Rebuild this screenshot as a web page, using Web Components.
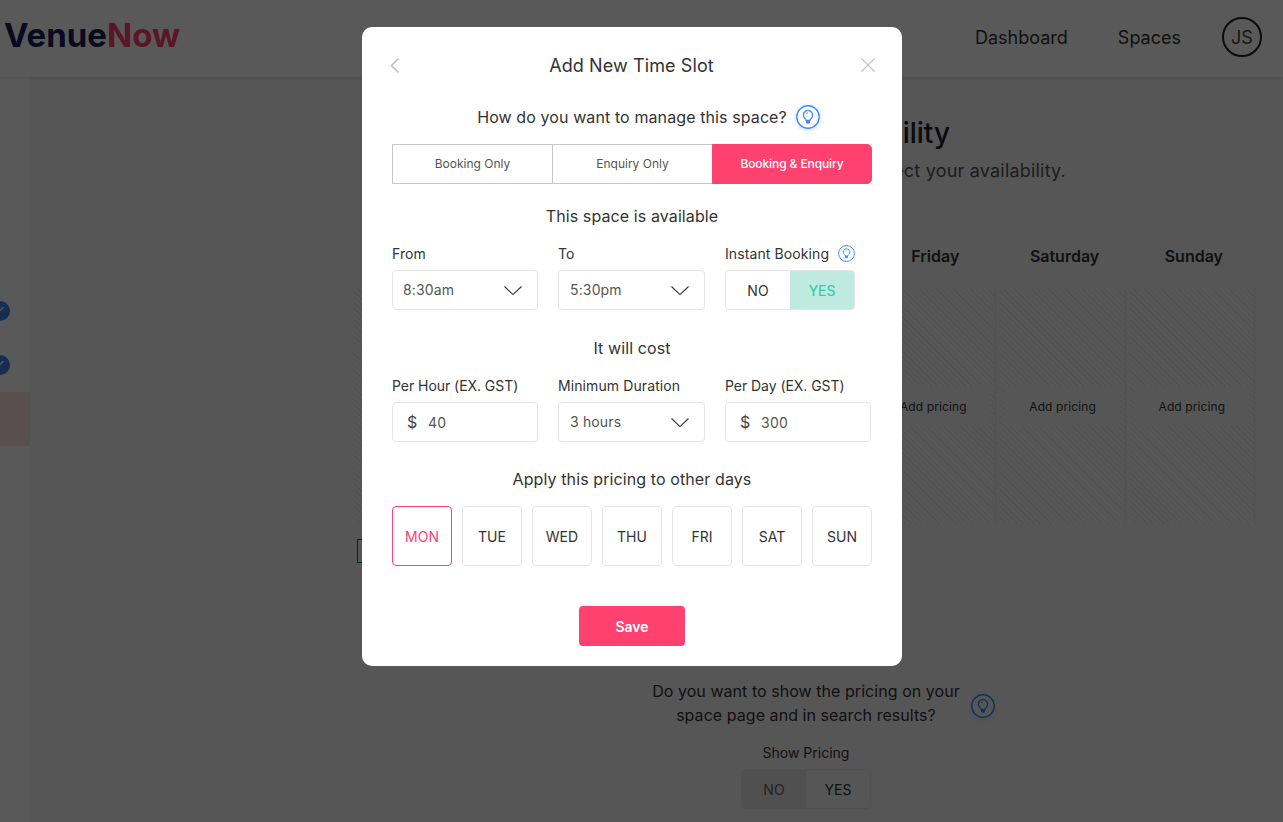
<!DOCTYPE html>
<html lang="en"><head><meta charset="utf-8"><title>Add New Time Slot</title>
<style>
html,body{margin:0;height:822px;overflow:hidden;background:#f6f6f6;font-family:Inter,"Noto Sans",sans-serif;color:#333}
</style></head><body>
<vn-page></vn-page>
<vn-overlay>
  <vn-modal></vn-modal>
</vn-overlay>
<script>
const bulb=(size,color)=>`<svg width="${size}" height="${size}" viewBox="0 0 24 24" fill="none" aria-hidden="true"><circle cx="12" cy="12" r="11.2" stroke="${color}" stroke-width="1.4"/><path d="M7.400 10a4.600 4.600 0 1 1 7.700 3.400c-.7.700-1.100 1.300-1.100 2.100h-4c0-.8-.4-1.400-1.100-2.100A4.600 4.600 0 0 1 7.400 10Z" stroke="${color}" stroke-width="1.300"/><path d="M10 15.500h4v2l-1 1.300h-2l-1-1.300Z" fill="${color}"/><path d="M10.200 9.200a2 2 0 0 1 1.800-1.500" stroke="${color}" stroke-width=".9"/></svg>`;
const chev=`<svg width="20" height="11" viewBox="0 0 20 11" fill="none" aria-hidden="true"><path d="M1.500 1.500 10 9.600l8.500-8.100" stroke="#333" stroke-width="1.100"/></svg>`;
function el(name,css,html){
  customElements.define(name,class extends HTMLElement{
    connectedCallback(){
      if(this.shadowRoot)return;
      const r=this.attachShadow({mode:"open"});
      r.innerHTML=`<style>${css}</style>${typeof html==="function"?html(this):html}`;
    }
  });
}
el("vn-hint",`:host{display:inline-flex;flex:none;border-radius:50%;box-shadow:0 1px 4px rgba(47,128,237,.25)}`,h=>bulb(h.getAttribute("size")||24,"#3f8cff"));

el("vn-header",`:host{display:flex;align-items:center;height:77px;background:#fff;box-shadow:0 1px 3px rgba(0,0,0,.12);position:relative;z-index:1;padding:0 21px 3px 4px;box-sizing:border-box;}
.logo{font-size:33px;font-weight:700;letter-spacing:0;color:#1a1f5c;margin-top:-4px;flex:1}
.logo b{font-weight:700;color:#ff4170}
nav{display:flex;align-items:center;font-size:18px;color:#333;letter-spacing:0}
span.l{margin-right:50px}
.av{width:40px;height:40px;box-sizing:border-box;border:2px solid #222;border-radius:50%;display:flex;align-items:center;justify-content:center;font-size:18px;color:#444}`,
`<div class="logo">Venue<b>Now</b></div><nav><span class="l">Dashboard</span><span class="l" style="margin-right:41px">Spaces</span><div class="av">JS</div></nav>`);

const tick=`<svg width="11" height="11" viewBox="0 0 11 11" fill="none"><path d="M.5 7 5.500 2" stroke="#fff" stroke-width="1.500"/></svg>`;
el("vn-sidebar",`:host{display:block;width:31px;box-sizing:border-box;background:#fff;border-right:1px solid #f0f0f0;padding-top:224px;overflow:hidden;flex:none}
.c{width:20px;height:20px;border-radius:50%;background:#3a80e8;margin:0 0 34px -10px;position:relative}
.c svg{position:absolute;left:8px;top:4px}
.a{height:54px;background:#ffe3e6;margin-top:-17px}`,
`<div class="c">${tick}</div><div class="c">${tick}</div><div class="a"></div>`);

el("vn-cell",`:host{display:block;height:235px;padding-top:98px;box-sizing:border-box;background:repeating-linear-gradient(45deg,#ececec 0 1px,#f8f8f8 1px 4px);border-right:1px solid #ebebeb}
div{margin:0 5px;height:39px;background:#f7f7f7;border-radius:4px;display:flex;align-items:center;justify-content:center;font-size:12px;color:#333;letter-spacing:.1px}`,
h=>h.hasAttribute("empty")?"":`<div>Add pricing</div>`);

el("vn-schedule",`:host{display:flex;flex-direction:column;align-items:center;width:901px;margin-left:323px;flex:none}
h1{align-self:flex-end;margin:37px 305px 0 0;font-size:28px;font-weight:500;line-height:38px;color:#1c2030;letter-spacing:0}
p{align-self:flex-end;margin:7px 189px 0 0;font-size:18px;line-height:24px;color:#555;letter-spacing:.2px}
.grid{display:grid;grid-template-columns:repeat(7,1fr);gap:0 4px;width:100%;margin-top:60px}
.d{font-size:16px;font-weight:600;color:#333;text-align:center;height:46px;line-height:26px;box-sizing:border-box;padding-left:3px}
.chk{align-self:flex-start;width:24px;height:24px;border:1px solid #1c5cc8;box-sizing:border-box;margin:15px 0 0 3px}
.q{display:flex;align-items:center;gap:11px;margin-top:116px;padding-left:38px;font-size:16px;line-height:24px;text-align:center;color:#333;letter-spacing:.05px}
.q vn-hint{margin-top:6px}
.sp{font-size:14px;margin:15px 0 0 3px;height:22px;line-height:22px;color:#333}
.t{display:flex;width:130px;height:40px;box-sizing:border-box;border:1px solid #e8e8e8;border-radius:4px;overflow:hidden;font-size:14px;margin:5px 0 0 3px}
.t span{flex:1;display:flex;align-items:center;justify-content:center}
.t .n{background:#e6e6e6;color:#666}`,
`<h1>ility</h1><p>ect your availability.</p>
<div class="grid">
<div class="d"></div><div class="d"></div><div class="d"></div><div class="d"></div><div class="d">Friday</div><div class="d">Saturday</div><div class="d">Sunday</div>
<vn-cell empty></vn-cell><vn-cell empty></vn-cell><vn-cell empty></vn-cell><vn-cell empty></vn-cell><vn-cell></vn-cell><vn-cell></vn-cell><vn-cell></vn-cell>
</div>
<div class="chk"></div>
<div class="q"><span>Do you want to show the pricing on your<br>space page and in search results?</span><vn-hint></vn-hint></div>
<div class="sp">Show Pricing</div>
<div class="t"><span class="n">NO</span><span>YES</span></div>`);

el("vn-page",`:host{display:block;height:822px;overflow:hidden}
main{display:flex;height:745px}`,
`<vn-header></vn-header><main><vn-sidebar></vn-sidebar><vn-schedule></vn-schedule></main>`);

el("vn-overlay",`:host{position:fixed;inset:0;background:rgba(0,0,0,.65);display:flex;justify-content:center;align-items:flex-start;padding:27px 19px 0 0;box-sizing:border-box;z-index:10}`,`<slot></slot>`);

el("vn-box",`:host{display:flex;align-items:center;height:40px;box-sizing:border-box;border:1px solid #e6e6e6;border-radius:4px;background:#fff;font-size:14px;color:#555;letter-spacing:.15px;padding:0 14px 0 10px;justify-content:space-between}
span{padding-bottom:1px}`,
h=>`<span>${h.getAttribute("value")}</span>${chev}`);
el("vn-money",`:host{display:flex;align-items:center;height:40px;box-sizing:border-box;border:1px solid #e6e6e6;border-radius:4px;background:#fff;font-size:14px;color:#555;letter-spacing:.3px;padding-left:14px}
i{font-style:normal;font-size:16px;width:21px;color:#444}`,
h=>`<i>$</i><span>${h.getAttribute("value")}</span>`);
el("vn-field",`:host{display:block}
label{display:flex;align-items:center;gap:9px;font-size:14px;color:#333;height:16px;margin:-1px 0 9px;letter-spacing:.1px;white-space:nowrap}
label.tight{letter-spacing:-.05px}`,
h=>`<label class="${h.hasAttribute("tight")?"tight":""}">${h.getAttribute("label")}${h.hasAttribute("hint")?bulb(17,"#3f8cff"):""}</label><slot></slot>`);
el("vn-yesno",`:host{display:flex;width:130px;height:40px;box-sizing:border-box;border:1px solid #e6e6e6;border-radius:4px;overflow:hidden;font-size:14px}
span{display:flex;align-items:center;justify-content:center;color:#333}
.n{width:64px}.y{flex:1;background:#bfeae0;color:#38cfa8;font-weight:500}`,
`<span class="n">NO</span><span class="y">YES</span>`);
el("vn-segments",`:host{display:flex;height:40px;font-size:12px;color:#555;letter-spacing:0}
span{width:161px;display:flex;align-items:center;justify-content:center;border:1px solid #c6c6c6;box-sizing:border-box;margin-right:-1px;padding-bottom:2px}
span:first-child{border-radius:5px 0 0 5px}
.on{width:160px;background:#ff4170;border-color:#ff4170;color:#fff;border-radius:0 5px 5px 0;margin-right:0;font-weight:500;letter-spacing:-.1px;position:relative}`,
`<span>Booking Only</span><span>Enquiry Only</span><span class="on">Booking &amp; Enquiry</span>`);
el("vn-days",`:host{display:flex;gap:10px;margin-top:15px}
span{width:60px;height:60px;box-sizing:border-box;border:1px solid #e6e6e6;border-radius:4px;display:flex;align-items:center;justify-content:center;font-size:14px;color:#333;letter-spacing:.05px}
.on{border-color:#ff4170;color:#ff4170}`,
`<span class="on">MON</span><span>TUE</span><span>WED</span><span>THU</span><span>FRI</span><span>SAT</span><span>SUN</span>`);

el("vn-modal",`:host{display:block;width:540px;height:639px;box-sizing:border-box;background:#fff;border-radius:10px;padding:0 30px;color:#333}
.head{display:flex;align-items:center;justify-content:space-between;height:76px;font-size:18px;font-weight:400;letter-spacing:.1px}
.head span{color:#333}
.head svg:first-child{margin-left:-4px}
.head svg:last-child{margin-right:-3px}
h2{font-size:16px;font-weight:400;margin:0;text-align:center;line-height:24px;letter-spacing:.1px}
.q{display:flex;align-items:center;justify-content:center;gap:9px;height:24px;margin:2px 0 15px;padding-left:33px}
.g{display:grid;grid-template-columns:146px 147px 146px;gap:20px}
.a{margin-top:20px;margin-bottom:18px}
.c{margin-top:26px;margin-bottom:18px}
.p{margin-top:25px}
.save{display:flex;justify-content:center;margin-top:40px}
button{width:106px;height:40px;border:0;border-radius:4px;background:#ff4170;color:#fff;font:600 14px Inter,sans-serif}`,
`<div class="head"><svg width="14" height="18" viewBox="0 0 14 18" fill="none"><path d="M10.500 2.500 3.500 9.500l7 7" stroke="#bdbdbd" stroke-width="1.500"/></svg><span>Add New Time Slot</span><svg width="14" height="14" viewBox="0 0 14 14" fill="none"><path d="m.5.5 13 13m0-13-13 13" stroke="#c4c4c4" stroke-width="1.100"/></svg></div>
<div class="q"><h2>How do you want to manage this space?</h2><vn-hint></vn-hint></div>
<vn-segments></vn-segments>
<h2 class="a">This space is available</h2>
<div class="g"><vn-field label="From"><vn-box value="8:30am"></vn-box></vn-field><vn-field label="To"><vn-box value="5:30pm" style="padding-left:11px"></vn-box></vn-field><vn-field label="Instant Booking" hint><vn-yesno></vn-yesno></vn-field></div>
<h2 class="c">It will cost</h2>
<div class="g"><vn-field label="Per Hour (EX. GST)" tight><vn-money value="40"></vn-money></vn-field><vn-field label="Minimum Duration"><vn-box value="3 hours" style="padding-left:11px"></vn-box></vn-field><vn-field label="Per Day (EX. GST)" tight><vn-money value="300"></vn-money></vn-field></div>
<h2 class="p">Apply this pricing to other days</h2>
<vn-days></vn-days>
<div class="save"><button>Save</button></div>`);
</script>
</body></html>
